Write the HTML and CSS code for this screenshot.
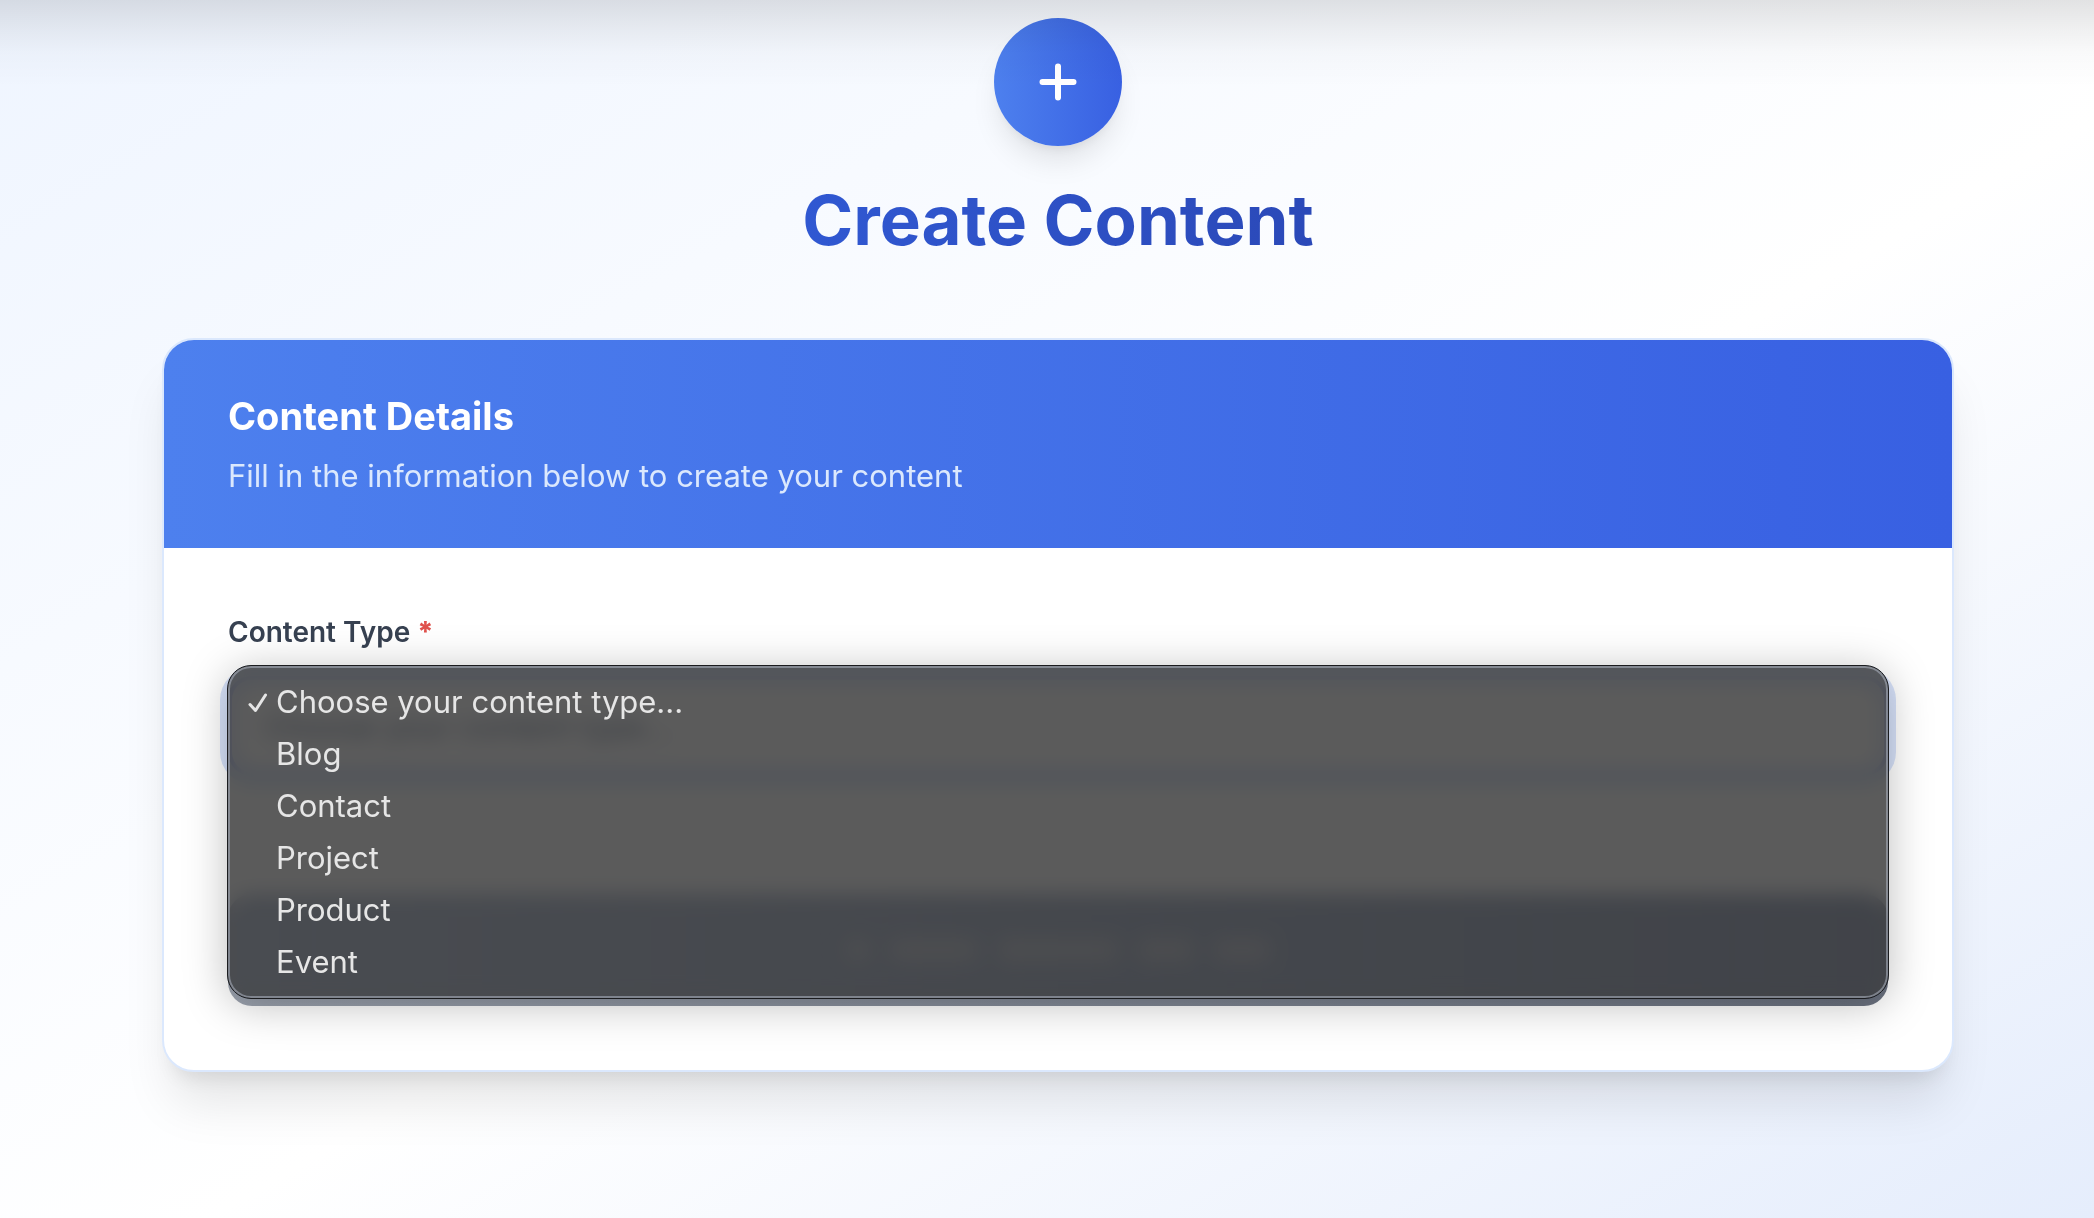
FILE: index.html
```html
<!DOCTYPE html>
<html lang="en">
<head>
  <meta charset="utf-8">
  <meta name="viewport" content="width=device-width, initial-scale=1">
  <title>Create Content</title>
  <link rel="stylesheet" href="styles.css">
</head>
<body>
  <main class="page">
    <header class="intro">
      <div class="intro-icon">
        <svg width="48" height="48" viewBox="0 0 48 48" fill="none" stroke="currentColor" stroke-width="6" stroke-linecap="round" aria-hidden="true">
          <path d="M24 8.5v31M8.5 24h31"/>
        </svg>
      </div>
      <h1 class="intro-title">Create Content</h1>
    </header>

    <section class="card">
      <div class="card-header">
        <h2 class="card-title">Content Details</h2>
        <p class="card-subtitle">Fill in the information below to create your content</p>
      </div>
      <form class="card-body">
        <label class="label" for="content-type">Content Type <span class="required">*</span></label>
        <div class="select-wrap">
          <select class="select" id="content-type">
            <option>Choose your content type...</option>
            <option>Blog</option>
            <option>Contact</option>
            <option>Project</option>
            <option>Product</option>
            <option>Event</option>
          </select>
          <ul class="menu" role="listbox" aria-label="Content Type">
            <li class="option" role="option" aria-selected="true">
              <svg class="check" width="20" height="20" viewBox="0 0 20 20" fill="none" stroke="currentColor" stroke-width="3" stroke-linecap="round" stroke-linejoin="round" aria-hidden="true">
                <path d="M2 11.5 7.5 17.5 17.5 2"/>
              </svg>
              Choose your content type...
            </li>
            <li class="option" role="option">Blog</li>
            <li class="option" role="option">Contact</li>
            <li class="option" role="option">Project</li>
            <li class="option" role="option">Product</li>
            <li class="option" role="option">Event</li>
          </ul>
        </div>
        <button class="submit" type="button" disabled aria-label="Create content">
          <span class="bar bar-icon"></span>
          <span class="bar bar-medium"></span>
          <span class="bar bar-long"></span>
          <span class="bar bar-short"></span>
          <span class="bar bar-short"></span>
        </button>
      </form>
    </section>
  </main>
</body>
</html>
```
FILE: styles.css
```css
*,
*::before {
  box-sizing: border-box;
}

body {
  margin: 0;
  font-family: Inter, "Liberation Sans", sans-serif;
}

h1,
h2,
p,
ul {
  margin: 0;
  padding: 0;
}

.page {
  position: relative;
  min-height: 100vh;
  padding: 18px 0 80px 22px;
  background: linear-gradient(to bottom right, #eff5ff, #ffffff 55%, #e5edfc);
}

/* soft shade cast by the bar above the page */
.page::before {
  content: "";
  position: absolute;
  inset: 0 0 auto;
  height: 88px;
  background: linear-gradient(rgba(0, 0, 0, 0.11), rgba(0, 0, 0, 0.055) 34%, rgba(0, 0, 0, 0.02) 60%, transparent);
  pointer-events: none;
  z-index: 1;
}

.intro {
  display: flex;
  flex-direction: column;
  align-items: center;
  gap: 34px;
  margin-bottom: 78px;
}

.intro-icon {
  display: flex;
  align-items: center;
  justify-content: center;
  width: 128px;
  height: 128px;
  border-radius: 50%;
  color: #ffffff;
  background: linear-gradient(to right, #4d80ee, #3860e2);
  box-shadow: 0 20px 30px -6px rgba(0, 0, 0, 0.1), 0 8px 12px -8px rgba(0, 0, 0, 0.1);
}

.intro-title {
  font-size: 69px;
  line-height: 80px;
  font-weight: 700;
  color: transparent;
  background: linear-gradient(to right, #3058d2, #2b49b8);
  background-clip: text;
}

.card {
  max-width: 1792px;
  margin: 0 auto;
  border: 2px solid #dbe8fd;
  border-radius: 32px;
  background: #ffffff;
  box-shadow: 0 40px 50px -10px rgba(0, 0, 0, 0.1), 0 16px 20px -12px rgba(0, 0, 0, 0.1);
}

.card-header {
  display: flex;
  flex-direction: column;
  gap: 8px;
  padding: 48px 64px;
  border-radius: 30px 30px 0 0;
  background: linear-gradient(to right, #4d80ee, #3860e2);
}

.card-title {
  font-size: 38px;
  line-height: 56px;
  font-weight: 700;
  color: #ffffff;
}

.card-subtitle {
  font-size: 31px;
  line-height: 48px;
  color: #dbe8fd;
}

.card-body {
  display: flex;
  flex-direction: column;
  padding: 64px;
}

.label {
  margin-bottom: 24px;
  font-size: 28px;
  line-height: 40px;
  font-weight: 600;
  color: #374151;
}

.required {
  font-weight: 800;
  color: #e0524d;
}

.select-wrap {
  position: relative;
  margin-bottom: 118px;
}

.select {
  display: block;
  width: 100%;
  height: 100px;
  padding: 0 32px;
  border: 4px solid #8796f2;
  border-radius: 24px;
  appearance: none;
  background: #ffffff;
  box-shadow: 0 0 0 8px #d7e2fa;
  font: inherit;
  font-size: 31px;
  color: #374151;
}

.menu {
  position: absolute;
  inset: -11px -1px auto;
  z-index: 2;
  padding: 10px 0;
  border: 1px solid #1b1c1f;
  border-radius: 24px;
  list-style: none;
  color: #e6e6e6;
  background: rgba(58, 58, 58, 0.83);
  backdrop-filter: blur(10px) saturate(2.4);
  box-shadow: inset 0 0 0 2px rgba(165, 172, 185, 0.6), 0 6px 44px rgba(0, 0, 0, 0.26);
}

.option {
  position: relative;
  padding-left: 48px;
  font-size: 31px;
  line-height: 52px;
}

.check {
  position: absolute;
  left: 20px;
  top: 17px;
}

.submit {
  display: flex;
  align-items: center;
  justify-content: center;
  gap: 20px;
  height: 112px;
  border: 0;
  border-radius: 24px;
  background: linear-gradient(to right, #9ca3af, #6b7280);
}

.bar {
  height: 24px;
  border-radius: 6px;
  background: rgba(255, 250, 240, 0.3);
}

.bar-icon {
  width: 24px;
}

.bar-short {
  width: 56px;
}

.bar-medium {
  width: 88px;
}

.bar-long {
  width: 120px;
}
```
